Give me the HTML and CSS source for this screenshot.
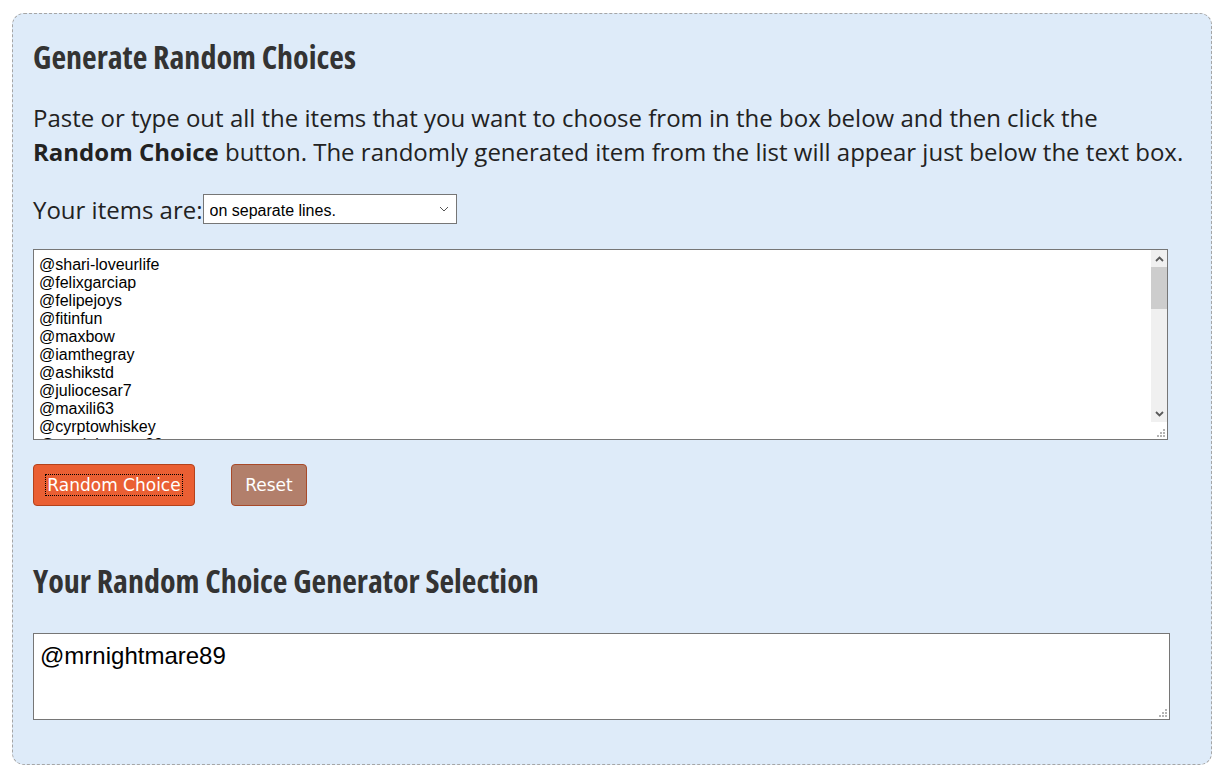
FILE: index.html
```html
<!DOCTYPE html>
<html>
<head>
<meta charset="utf-8">
<link rel="stylesheet" href="styles.css">
</head>
<body>
<div class="box">
  <h2 class="title">Generate Random Choices</h2>
  <p class="intro">Paste or type out all the items that you want to choose from in the box below and then click the <b>Random Choice</b> button. The randomly generated item from the list will appear just below the text box.</p>
  <div class="items-row">
    <label class="items-label">Your items are:</label><select class="sel"><option>on separate lines.</option><option>separated by commas.</option></select>
  </div>
  <div class="list-wrap">
    <textarea class="list">@shari-loveurlife
@felixgarciap
@felipejoys
@fitinfun
@maxbow
@iamthegray
@ashikstd
@juliocesar7
@maxili63
@cyrptowhiskey
@mrnightmare89
@steemitph
@joeyarnoldvn
@anomadsoul
@sirknight
@gringalicious
@ace108
@allasyummyfood
@bitcoinflood
@cryptoctopus
@dwinblood
@elyaque
@gmichelbkk
@happyphoenix
@jackmiller
@kevinwong
@lordvader
@meesterboom
@nanzo-scoop
@onceuponatime
@papa-pepper
@rainman
@stellabelle
@teamsteem
@thecryptofiend</textarea>
    <div class="sb">
      <div class="sb-btn"><svg width="9" height="6" viewBox="0 0 9 6"><path d="M1 5l3.5-3.5L8 5" fill="none" stroke="#5a5a5a" stroke-width="1.8"/></svg></div>
      <div class="sb-track"><div class="sb-thumb"></div></div>
      <div class="sb-btn"><svg width="9" height="6" viewBox="0 0 9 6"><path d="M1 1l3.5 3.5L8 1" fill="none" stroke="#5a5a5a" stroke-width="1.8"/></svg></div>
    </div>
    <svg class="grip" width="8" height="8" viewBox="0 0 8 8"><g fill="#b4b4b4"><rect x="6" y="0" width="2" height="2"/><rect x="3" y="3" width="2" height="2"/><rect x="6" y="3" width="2" height="2"/><rect x="0" y="6" width="2" height="2"/><rect x="3" y="6" width="2" height="2"/><rect x="6" y="6" width="2" height="2"/></g></svg>
  </div>
  <div class="btns">
    <button class="btn btn-go"><span class="focus">Random Choice</span></button>
    <button class="btn btn-reset">Reset</button>
  </div>
  <h2 class="title title2">Your Random Choice Generator Selection</h2>
  <div class="result-wrap">
    <textarea class="result">@mrnightmare89</textarea>
    <svg class="grip" width="8" height="8" viewBox="0 0 8 8"><g fill="#b4b4b4"><rect x="6" y="0" width="2" height="2"/><rect x="3" y="3" width="2" height="2"/><rect x="6" y="3" width="2" height="2"/><rect x="0" y="6" width="2" height="2"/><rect x="3" y="6" width="2" height="2"/><rect x="6" y="6" width="2" height="2"/></g></svg>
  </div>
</div>
</body>
</html>
```
FILE: styles.css
```css
html, body { margin: 0; padding: 0; background: #ffffff; }
body { font-family: "Open Sans", "Liberation Sans", sans-serif; color: #222; }
.box {
  box-sizing: border-box;
  width: 1200px;
  height: 752px;
  margin: 13px 0 0 12px;
  padding: 0 20px;
  background: #deebf9;
  border: 1px dashed #a6a6a6;
  border-radius: 12px;
}
.title {
  font-family: "Open Sans", sans-serif;
  font-stretch: 75%;
  font-weight: 700;
  font-size: 32px;
  color: #333;
  margin: 0;
  padding-top: 22px;
  line-height: 42px;
}
.intro {
  font-size: 24px;
  line-height: 34px;
  margin: 23px 0 0 0;
  color: #222;
}
.intro b { font-weight: 700; }
.items-row { margin-top: 23px; display: flex; align-items: center; height: 34px; }
.items-label { font-size: 24px; color: #222; }
.sel {
  appearance: none;
  -webkit-appearance: none;
  font-family: "Liberation Sans", Arial, sans-serif;
  font-size: 16px;
  width: 254px;
  height: 30px;
  border: 1px solid #767676;
  border-radius: 0;
  background: #fff url("data:image/svg+xml,%3Csvg xmlns='http://www.w3.org/2000/svg' width='10' height='6' viewBox='0 0 10 6'%3E%3Cpath d='M1 1l4 4 4-4' fill='none' stroke='%23555' stroke-width='1'/%3E%3C/svg%3E") no-repeat right 7px center;
  color: #000;
  padding: 2px 6px 0;
}
.list-wrap { position: relative; width: 1135px; height: 191px; margin-top: 23px; }
.list {
  display: block;
  box-sizing: border-box;
  width: 1135px;
  height: 191px;
  border: 1px solid #767676;
  font-family: "Liberation Sans", Arial, sans-serif;
  font-size: 16px;
  line-height: 18px;
  padding: 6px 22px 6px 5px;
  color: #000;
  background: #fff;
  overflow: hidden;
  resize: none;
}
.sb {
  position: absolute;
  top: 1px;
  right: 1px;
  width: 16px;
  height: 172px;
  background: #f0f0f0;
  display: flex;
  flex-direction: column;
}
.sb-btn { height: 17px; display: flex; align-items: center; justify-content: center; }
.sb-track { flex: 1; }
.sb-thumb { height: 42px; background: #cdcdcd; }
.grip { position: absolute; right: 3px; bottom: 3px; }
.btns { display: flex; gap: 36px; margin-top: 24px; }
.btn {
  font-family: "DejaVu Sans", Verdana, sans-serif;
  font-size: 17px;
  color: #fff;
  height: 42px;
  border-radius: 4px;
  padding: 0 10px;
  cursor: pointer;
}
.btn-go { background: #ea5f33; border: 1px solid #b3421c; width: 162px; }
.btn-reset { background: #b27f6b; border: 1px solid #a84a2a; width: 76px; }
.focus { outline: 1px dotted #000; padding: 0 1px; }
.title2 { padding-top: 54px; }
.result-wrap { position: relative; width: 1137px; height: 87px; margin-top: 31px; }
.result {
  display: block;
  box-sizing: border-box;
  width: 1137px;
  height: 87px;
  border: 1px solid #767676;
  font-family: "Liberation Sans", Arial, sans-serif;
  font-size: 24px;
  line-height: 28px;
  padding: 8px 6px;
  color: #000;
  background: #fff;
  resize: none;
}
```
